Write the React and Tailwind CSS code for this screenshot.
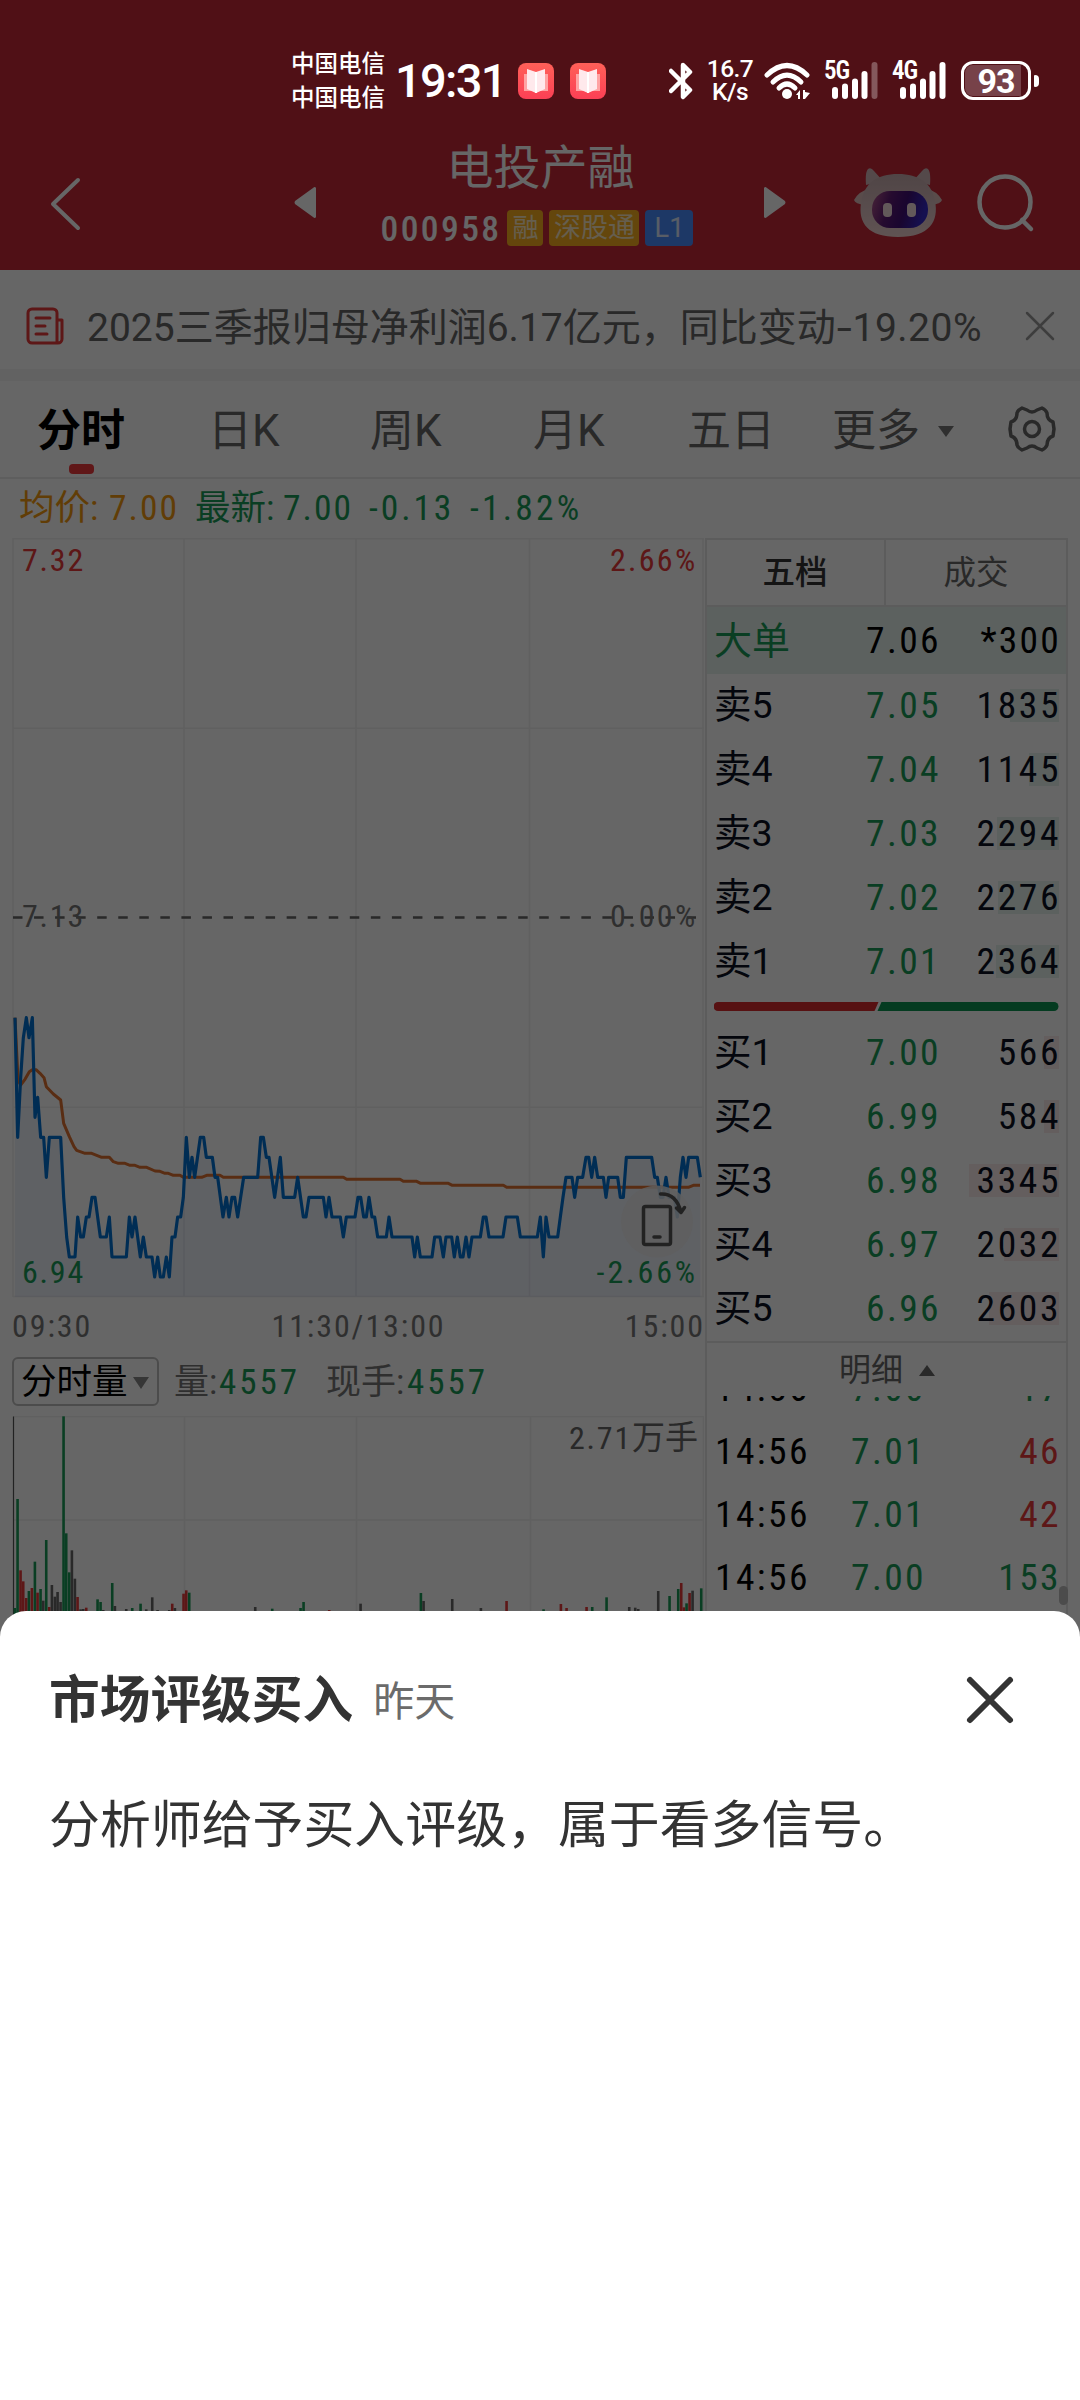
import React from "react";

const G = "#1a9c58";
const R = "#e83a3a";
const K = "#666666";

const PRICE =
  "45,113 53,472 62,293 70,173 79,113 87,173 97,113 105,412 113,352 122,472 131,472 139,592 148,472 182,472 191,652 200,771 208,831 225,831 233,711 242,771 250,771 259,711 267,711 276,652 285,652 301,771 319,771 328,711 336,831 379,831 388,711 396,771 405,711 421,831 430,771 439,831 456,831 464,891 473,831 481,891 490,891 499,831 508,891 516,771 525,771 533,711 542,711 550,652 559,472 568,592 576,532 584,592 601,472 611,472 619,532 637,532 645,592 653,592 669,711 679,652 687,711 696,652 704,652 713,711 731,592 773,592 782,472 790,472 799,532 807,532 824,652 841,532 850,652 884,652 893,592 910,711 918,711 927,652 970,652 978,711 987,652 996,711 1021,711 1030,771 1039,711 1065,711 1074,652 1082,652 1091,711 1099,711 1107,652 1116,711 1124,711 1133,771 1159,771 1167,711 1176,771 1236,771 1244,831 1252,771 1261,831 1296,831 1304,771 1320,771 1330,831 1338,771 1355,771 1363,831 1372,771 1381,831 1389,831 1398,771 1407,831 1416,771 1441,771 1450,711 1458,711 1467,771 1509,771 1518,711 1552,711 1561,771 1612,771 1621,711 1630,831 1638,711 1647,771 1673,771 1681,711 1689,652 1698,592 1716,592 1724,652 1733,592 1748,592 1758,532 1766,532 1775,592 1784,532 1793,592 1810,592 1818,652 1826,592 1853,592 1861,652 1870,652 1879,532 1955,532 1964,592 1972,592 1981,652 1989,652 1998,592 2007,652 2023,652 2032,711 2041,592 2049,532 2058,592 2066,532 2092,532 2101,592";

const AVERAGE =
  "45,113 54,300 62,315 75,298 88,275 97,269 108,269 120,280 132,293 139,320 160,342 182,360 191,430 208,470 222,500 230,511 255,520 275,520 305,532 328,532 340,545 355,550 375,550 390,556 405,556 420,562 440,562 465,573 480,574 495,580 505,580 520,586 540,586 550,592 605,592 620,586 660,586 670,592 1030,592 1040,598 1200,598 1210,604 1250,604 1262,610 1345,610 1357,616 1510,616 1520,622 2065,622 2080,616 2100,616";

const VOLUME = [
  [45, 954, G], [53, 627, G], [62, 841, R], [70, 874, R], [79, 924, R], [87, 903, G], [96, 894, R], [105, 815, G],
  [113, 908, R], [122, 897, G], [130, 932, K], [139, 750, G], [148, 951, R], [156, 885, K], [165, 920, K], [173, 906, K],
  [182, 936, K], [191, 379, G], [199, 730, G], [208, 847, G], [216, 781, K], [225, 866, K], [233, 921, R], [242, 958, K],
  [250, 957, K], [259, 953, R], [293, 928, G], [302, 936, G], [310, 960, K], [337, 879, G], [345, 948, K], [379, 957, K],
  [397, 954, G], [422, 941, G], [439, 958, K], [457, 922, K], [473, 960, K], [508, 960, K], [517, 941, R], [525, 954, K],
  [551, 911, R], [559, 901, R], [568, 908, G], [766, 951, K], [817, 956, G], [902, 954, G], [911, 936, G], [988, 960, R],
  [1082, 941, K], [1263, 909, G], [1271, 933, K], [1357, 927, K], [1443, 954, K], [1520, 933, R], [1631, 958, G],
  [1683, 942, R], [1700, 954, R], [1760, 951, R], [1777, 951, G], [1820, 922, G], [1888, 951, K], [1906, 953, K],
  [1915, 957, K], [1975, 903, K], [2009, 918, G], [2035, 897, G], [2044, 879, R], [2052, 952, R], [2060, 940, G],
  [2069, 909, R], [2078, 902, K], [2104, 895, G],
];

const ASKS = [
  ["卖5", "7.05", "1835", 49],
  ["卖4", "7.04", "1145", 30],
  ["卖3", "7.03", "2294", 62],
  ["卖2", "7.02", "2276", 61],
  ["卖1", "7.01", "2364", 63],
];
const BIDS = [
  ["买1", "7.00", "566", 15],
  ["买2", "6.99", "584", 15],
  ["买3", "6.98", "3345", 90],
  ["买4", "6.97", "2032", 55],
  ["买5", "6.96", "2603", 70],
];
const TRADES = [
  ["14:56", "7.00", "17", "text-[#1a9c58]"],
  ["14:56", "7.01", "46", "text-[#e83a3a]"],
  ["14:56", "7.01", "42", "text-[#e83a3a]"],
  ["14:56", "7.00", "153", "text-[#1a9c58]"],
];

function BookIcon() {
  return (
    <svg width="36" height="36" viewBox="0 0 36 36">
      <defs>
        <linearGradient id="book" x1="0" y1="0" x2="0" y2="1">
          <stop offset="0" stopColor="#ff6058" />
          <stop offset="1" stopColor="#fb4055" />
        </linearGradient>
      </defs>
      <rect width="36" height="36" rx="8" fill="url(#book)" />
      <path d="M6 11h24v17h-9l-3 2-3-2H6z" fill="#ffa3a3" />
      <path d="M9 6l9 3 9-3v20l-9 4-9-4z" fill="#ffe9ec" />
      <path d="M18 9v21" stroke="#fff" strokeWidth="2" />
    </svg>
  );
}

function Signal({ faded }) {
  return (
    <svg width="46" height="37" viewBox="0 0 46 37" fill="#fff">
      <rect x="0" y="25" width="6" height="12" rx="3" />
      <rect x="10" y="21.500" width="6" height="15.500" rx="3" />
      <rect x="20" y="16.500" width="6" height="20.500" rx="3" />
      <rect x="29.500" y="9" width="6" height="28" rx="3" />
      <rect x="39.500" y="0" width="6" height="37" rx="3" opacity={faded ? 0.3 : 1} />
    </svg>
  );
}

function StatusBar() {
  return (
    <div className="relative z-20 flex h-[120px] items-center pt-[41px] pl-[291px] text-white">
      <div className="flex w-[104px] flex-col text-[23.5px] leading-[34px] font-medium">
        <span>中国电信</span>
        <span>中国电信</span>
      </div>
      <div className="w-[123px] text-[47px] leading-none font-medium tracking-[-1.7px]">19:31</div>
      <div className="flex w-[151px] gap-4">
        <BookIcon />
        <BookIcon />
      </div>
      <svg className="w-[37px] shrink-0" width="37" height="38" viewBox="0 0 37 38" fill="none" stroke="#fff" strokeWidth="4.500" strokeLinecap="round" strokeLinejoin="round">
        <path d="M2 9l19 19-7 7V3l7 7L2 29" />
      </svg>
      <div className="flex w-[58px] shrink-0 flex-col items-center pr-[10px] text-[24.5px] leading-[22.5px] font-medium tracking-[-0.500px]">
        <span>16.7</span>
        <span>K/s</span>
      </div>
      <svg className="shrink-0" width="60" height="38" viewBox="0 0 60 38" fill="none" stroke="#fff" strokeWidth="5" strokeLinecap="round">
        <path d="M3 13Q23 -6 43 13" />
        <path d="M9 20Q23 6 37 20" />
        <path d="M15 26Q23 18 31 26" />
        <circle cx="23" cy="32" r="5" fill="#fff" stroke="none" />
        <path d="M32 33l4-5v9h-2v-4zM39 28h2v2l5 1-5 6h-2z" fill="#fff" stroke="none" />
      </svg>
      <div className="relative h-[37px] w-[68px] shrink-0 pl-[8px]">
        <Signal faded />
        <span className="absolute -top-px left-0 text-[25px] leading-[20px] font-semibold tracking-[-1px] [font-stretch:80%]">5G</span>
      </div>
      <div className="relative h-[37px] w-[68px] shrink-0 pl-[8px]">
        <Signal />
        <span className="absolute -top-px left-0 text-[25px] leading-[20px] font-semibold tracking-[-1px] [font-stretch:80%]">4G</span>
      </div>
      <div className="ml-px flex h-[39px] w-[70px] shrink-0 items-center justify-center rounded-[12px] border-[3px] border-white p-[1px]">
        <div className="flex h-full w-full items-center justify-center rounded-[8px] bg-linear-to-r from-[#774249] from-90% to-[#501017] to-90% text-[34px] leading-none font-bold tracking-[-1px]">
          93
        </div>
      </div>
      <div className="ml-[3px] h-[12px] w-[5px] rounded-r-[4px] rounded-l-[1px] bg-white" />
    </div>
  );
}

function Robot() {
  return (
    <svg width="90" height="72" viewBox="0 0 90 72" opacity="0.850">
      <defs>
        <linearGradient id="face" x1="0" y1="0" x2="1" y2="0.200">
          <stop offset="0" stopColor="#b0619c" />
          <stop offset="0.350" stopColor="#4d1a80" />
          <stop offset="0.650" stopColor="#2a0a80" />
          <stop offset="1" stopColor="#1c28e0" />
        </linearGradient>
        <linearGradient id="head" x1="0" y1="0" x2="0" y2="1">
          <stop offset="0" stopColor="#c8c4c4" />
          <stop offset="1" stopColor="#f6eeea" />
        </linearGradient>
      </defs>
      <path d="M13 18Q12 5 15 2Q18 0 21 4L30 14zM77 18Q78 5 75 2Q72 0 69 4L60 14z" fill="#d6cfcf" />
      <path d="M16 22Q6 24 1 33Q2 37 12 38zM74 22Q84 24 89 33Q88 37 78 38z" fill="#e2d8d4" />
      <path d="M45 7C66 7 79 16 82 34C86 54 77 70 45 70C15 70 5 56 8 36C11 16 24 7 45 7z" fill="url(#head)" />
      <rect x="19" y="24" width="56" height="37" rx="18" fill="url(#face)" />
      <rect x="30" y="36" width="9" height="14" rx="4" fill="#fff" />
      <rect x="54" y="36" width="9" height="14" rx="4" fill="#fff" />
    </svg>
  );
}

function TitleBar() {
  return (
    <div className="flex h-[150px] items-start text-white">
      <svg className="mt-[57px] ml-[49px]" width="33" height="54" viewBox="0 0 33 54" fill="none" stroke="#fff" strokeWidth="4" strokeLinecap="round" strokeLinejoin="round">
        <path d="M29 3L4 27L29 51" />
      </svg>
      <svg className="mt-[66px] ml-[212px]" width="23" height="33" viewBox="0 0 23 33" fill="#fff">
        <path d="M22 2v29q-1 2-3 0L1 18q-1-1.500 0-3L19 2q2-2 3 0z" />
      </svg>
      <div className="flex w-[447px] flex-col items-center">
        <div className="mt-[20px] text-[47px] leading-[56px]">电投产融</div>
        <div className="mt-[14px] flex h-[36px] items-center pr-[7px]">
          <span className="mr-[6px] pt-[3px] text-[35.5px] leading-none font-medium tracking-[2.4px] [font-stretch:87%]">000958</span>
          <span className="mr-[6px] flex h-[36px] w-[36px] items-center justify-center rounded bg-[#fab01e] text-[26px] leading-none text-white/75">融</span>
          <span className="mr-[6px] flex h-[36px] w-[90px] items-center justify-center rounded bg-[#fab01e] text-[27px] leading-none text-white/75">深股通</span>
          <span className="flex h-[36px] w-[48px] items-center justify-center rounded bg-[#4a8cff] text-[27px] leading-none text-white/80">L1</span>
        </div>
      </div>
      <svg className="mt-[66px] -ml-px" width="23" height="33" viewBox="0 0 23 33" fill="#fff">
        <path d="M1 2v29q1 2 3 0L22 18q1-1.500 0-3L4 2q-2-2-3 0z" />
      </svg>
      <div className="mt-[47px] ml-[67px]">
        <Robot />
      </div>
      <svg className="mt-[53px] ml-[32px]" width="62" height="62" viewBox="0 0 62 62" fill="none" stroke="#fff" strokeWidth="4.500" strokeLinecap="round">
        <circle cx="30" cy="29" r="25.500" />
        <path d="M47 47l9 9" />
      </svg>
    </div>
  );
}

function NewsBar() {
  return (
    <div className="flex h-[99px] items-center pl-[26px] text-[#666]">
      <svg className="mt-[14px]" width="38" height="39" viewBox="0 0 38 39" fill="none" stroke="#e83a3a" strokeWidth="3" strokeLinejoin="round" strokeLinecap="round">
        <path d="M31 36H6a4 4 0 0 1-4-4V6a4 4 0 0 1 4-4h21a4 4 0 0 1 4 4v30h1a4 4 0 0 0 4-4V13h-5M10 11h14M10 19h9M10 27h11" />
      </svg>
      <div className="mt-[17px] ml-[23px] w-[936px] text-[39px] leading-none whitespace-nowrap">
        2025三季报归母净利润6.17亿元，同比变动
        <span className="mx-[3px] inline-block origin-center scale-x-140">-</span>
        <span className="tracking-[0.500px]">19.20%</span>
      </div>
      <svg className="mt-[12px] ml-[2px]" width="30" height="30" viewBox="0 0 30 30" stroke="#999" strokeWidth="2.500" strokeLinecap="round">
        <path d="M2 2l26 26M28 2L2 28" />
      </svg>
    </div>
  );
}

function PeriodTabs() {
  return (
    <div className="grid h-[98px] grid-cols-[171px_162px_163px_154px_145px_105px_69px_1fr] border-b-2 border-[#ebebeb] pt-[19px] pl-[37px] text-[44px] leading-[62px] text-[#666]">
      <div className="flex w-[88px] flex-col items-center font-bold text-black">
        分时
        <span className="mt-[2px] ml-px h-[10px] w-[25px] rounded-[4px] bg-[#f03a3e]" />
      </div>
      <span>日K</span>
      <span>周K</span>
      <span>月K</span>
      <span>五日</span>
      <span>更多</span>
      <svg className="mt-[25px]" width="18" height="13" viewBox="0 0 18 13" fill="#777">
        <path d="M1 1h16l-8 11z" />
      </svg>
      <svg className="mt-[4px] ml-[1px]" width="50" height="50" viewBox="0 0 50 50" fill="none" stroke="#666" strokeWidth="3.500" strokeLinejoin="round">
        <path d="M15 4L20 6Q25 10 30 6L35 4Q39 6 40 9Q40 16 46 18L47 25L46 32Q40 34 40 41Q39 44 35 46L30 44Q25 40 20 44L15 46Q11 44 10 41Q10 34 4 32L3 25L4 18Q10 16 10 9Q11 6 15 4z" />
        <circle cx="25" cy="25" r="7.500" />
      </svg>
    </div>
  );
}

function QuoteLine() {
  return (
    <div className="grid h-[59px] grid-cols-[90px_86px_88px_86px_101px_1fr] items-center pt-px pl-[19px] text-[35.5px] leading-none whitespace-nowrap text-[#1a9c58]">
      <span className="text-[#f39a10]">均价:</span>
      <span className="tracking-[2px] text-[#f39a10] [font-stretch:87%]">7.00</span>
      <span>最新:</span>
      <span className="tracking-[2px] [font-stretch:87%]">7.00</span>
      <span className="tracking-[2.900px] [font-stretch:87%]">-0.13</span>
      <span className="tracking-[3.200px] [font-stretch:87%]">-1.82%</span>
    </div>
  );
}

function PriceChart() {
  return (
    <svg className="block tracking-[1.800px] [font-stretch:87%]" width="704" height="760" viewBox="0 538 704 760" fontSize="32">
      <g stroke="#f0f0f0" strokeWidth="1.500" fill="none">
        <path d="M13 538.700H704M13 728.300H704M13 1107.300H704M13 1296.500H704M13 538V1297M184 538V1297M356 538V1297M529.500 538V1297M703 538V1297" />
      </g>
      <polygon points={`45,950 ${PRICE} 2101,950`} fill="#0a40c0" opacity="0.070" transform="translate(0 980) scale(0.33333)" />
      <path d="M13 917.500H696" stroke="#666" strokeWidth="2.500" strokeDasharray="9.500 11.550" />
      <g transform="translate(0 980) scale(0.33333)" fill="none" strokeLinejoin="round">
        <polyline points={AVERAGE} stroke="#de7030" strokeWidth="9" />
        <polyline points={PRICE} stroke="#0070d2" strokeWidth="9.500" />
      </g>
      <circle cx="657" cy="1221.500" r="36" fill="#ececec" opacity="0.850" />
      <g fill="none" stroke="#555" strokeWidth="3.500" strokeLinecap="round" strokeLinejoin="round">
        <rect x="643.500" y="1206.500" width="27" height="38" rx="2" />
        <path d="M654 1237h6M660.500 1194Q676 1193 681 1212M676.500 1208L681 1212.500L684.500 1207.500" />
      </g>
      <g fill="#e83a3a">
        <text x="22" y="571">7.32</text>
        <text className="tracking-[2.300px]" x="697.500" y="571" textAnchor="end">2.66%</text>
      </g>
      <g fill="#777">
        <text x="22" y="927">7.13</text>
        <text className="tracking-[2.300px]" x="697.500" y="927" textAnchor="end">0.00%</text>
      </g>
      <g fill="#1a9c58">
        <text x="22" y="1283">6.94</text>
        <text className="tracking-[2.900px]" x="698" y="1283" textAnchor="end">-2.66%</text>
      </g>
    </svg>
  );
}

function VolumeChart() {
  return (
    <svg className="block" width="704" height="224" viewBox="0 1416 704 224">
      <path d="M13 1416.500H704M13 1520H704M184.500 1416V1640M356.500 1416V1640M530.500 1416V1640M703.500 1416V1640" stroke="#f0f0f0" strokeWidth="1.500" fill="none" />
      <path d="M13.500 1416.500V1640" stroke="#555" strokeWidth="1.200" />
      {VOLUME.map(([x, y, c]) => (
        <rect key={x} x={x / 3 - 1.4} y={1290 + y / 3} width="2.600" height={350 - y / 3} fill={c} />
      ))}
      <text x="698" y="1448.500" textAnchor="end" fontSize="32" fill="#666">
        <tspan className="tracking-[1.800px] [font-stretch:87%]">2.71</tspan>
        <tspan fontSize="33">万手</tspan>
      </text>
    </svg>
  );
}

function LeftColumn() {
  return (
    <div className="w-[705px]">
      <PriceChart />
      <div className="flex h-[56px] items-center justify-between pb-px pl-[12px] text-[32px] leading-none tracking-[1.900px] text-[#777] [font-stretch:87%]">
        <span>09:30</span>
        <span>11:30/13:00</span>
        <span>15:00</span>
      </div>
      <div className="flex h-[62px] items-start pt-[3px] pl-[12px]">
        <div className="flex h-[49px] w-[147px] items-center rounded-[6px] border-2 border-[#bdbdbd] pt-[2px] pl-[7px] text-[35.5px] leading-none">
          分时量
          <svg className="ml-[5px]" width="16" height="12" viewBox="0 0 16 12" fill="#888">
            <path d="M0 0h16L8 12z" />
          </svg>
        </div>
        <div className="flex h-[49px] items-center pt-[2px] pl-[15px] text-[35px] leading-none text-[#777]">
          <span className="w-[45px]">量:</span>
          <span className="w-[107px] tracking-[3px] text-[#1a9c58] [font-stretch:87%] [font-weight:450]">4557</span>
          <span className="w-[81px]">现手:</span>
          <span className="tracking-[3px] text-[#1a9c58] [font-stretch:87%] [font-weight:450]">4557</span>
        </div>
      </div>
      <VolumeChart />
    </div>
  );
}

function Level({ row, tint }) {
  const [name, price, qty, width] = row;
  return (
    <div className="grid h-[64px] grid-cols-[143px_84px_1fr] items-center pr-[7px] pl-[7px] text-[37.5px] leading-none text-[#0c1022]">
      <span>{name}</span>
      <span className="text-right tracking-[2.400px] text-[#1a9c58] [font-stretch:87%]">{price}</span>
      <span className="relative -mr-px pr-px text-right tracking-[2.600px] [font-stretch:87%]">
        <i className={`absolute top-[2px] right-px h-[33px] ${tint}`} style={{ width }} />
        <span className="relative -mr-[2px]">{qty}</span>
      </span>
    </div>
  );
}

function OrderBook() {
  return (
    <div className="relative h-[1102px] w-[363px] border-2 border-[#e6e6e6]">
      <div className="grid h-[67px] grid-cols-[179px_1fr] border-b-2 border-[#e6e6e6] text-[32.5px] leading-none">
        <div className="flex items-center justify-center border-r-2 border-[#e6e6e6] pt-px pr-px font-medium text-[#333]">五档</div>
        <div className="flex items-center justify-center pt-px text-[#666]">成交</div>
      </div>
      <div className="grid h-[67px] grid-cols-[143px_84px_1fr] items-center bg-[#e6f2ee] pr-[5px] pl-[7px] text-[37.5px] leading-none text-black">
        <span className="text-[38px] text-[#1a9c58]">大单</span>
        <span className="text-right tracking-[2.400px] [font-stretch:87%]">7.06</span>
        <span className="text-right tracking-[2.200px] [font-stretch:87%]">*300</span>
      </div>
      {ASKS.map((r) => (
        <Level key={r[0]} row={r} tint="bg-[#e6f2ee]" />
      ))}
      <svg className="mt-[8px] ml-[7px] block" width="345" height="9" viewBox="0 0 346 9">
        <path d="M4 0H165L161 9H4a4.500 4.500 0 0 1 0-9z" fill="#d92b2e" />
        <path d="M168 0H341a4.500 4.500 0 0 1 0 9H164z" fill="#0c9450" />
      </svg>
      <div className="mt-[10px] border-b-2 border-[#e6e6e6]">
        {BIDS.map((r) => (
          <Level key={r[0]} row={r} tint="bg-[#f9eaea]" />
        ))}
      </div>
      <div className="flex h-[53px] items-center pt-px pl-[132px] text-[32px] leading-none text-[#666]">
        明细
        <svg className="ml-[16px]" width="16" height="11" viewBox="0 0 16 11" fill="#666">
          <path d="M0 11h16L8 0z" />
        </svg>
      </div>
      <div className="h-[240px] overflow-hidden">
        <div className="-mt-[39px]">
          {TRADES.map(([t, p, q, c], i) => (
            <div key={i} className="grid h-[63px] grid-cols-[136px_1fr_100px] items-center pr-[5px] pl-[8px] text-[37.5px] leading-none tracking-[2.400px] text-black [font-stretch:87%]">
              <span>{t}</span>
              <span className="text-[#1a9c58]">{p}</span>
              <span className={`text-right ${c}`}>{q}</span>
            </div>
          ))}
        </div>
      </div>
      <div className="absolute top-[1046px] -right-[2px] h-[19px] w-[9px] rounded-[5px] bg-[#bdbdbd]" />
    </div>
  );
}

function Sheet() {
  return (
    <section className="absolute inset-x-0 bottom-0 z-20 h-[789px] rounded-t-[26px] bg-white px-[49px] text-[#333]">
      <div className="flex h-[178px] items-center">
        <h2 className="mt-[3px] text-[50.7px] leading-none font-bold">市场评级买入</h2>
        <span className="mt-[4px] ml-[20px] text-[41px] leading-none text-[#6b6b6b]">昨天</span>
        <svg className="mr-[16px] ml-auto" width="50" height="50" viewBox="0 0 50 50" stroke="#333" strokeWidth="6" strokeLinecap="round">
          <path d="M5 5l40 40M45 5l-40 40" />
        </svg>
      </div>
      <p className="mt-[7px] text-[50.9px] leading-[60px] whitespace-nowrap">分析师给予买入评级，属于看多信号。</p>
    </section>
  );
}

export default function App() {
  return (
    <div className="relative h-[2400px] w-[1080px] overflow-hidden bg-white font-[Roboto,'Noto_Sans_CJK_SC',sans-serif]">
      <header className="h-[270px] bg-[#c82839]">
        <StatusBar />
        <TitleBar />
      </header>
      <NewsBar />
      <div className="h-[12px] bg-[#f5f5f5]" />
      <PeriodTabs />
      <QuoteLine />
      <div className="flex">
        <LeftColumn />
        <OrderBook />
      </div>
      <div className="absolute inset-0 z-10 bg-black/60" />
      <Sheet />
    </div>
  );
}
